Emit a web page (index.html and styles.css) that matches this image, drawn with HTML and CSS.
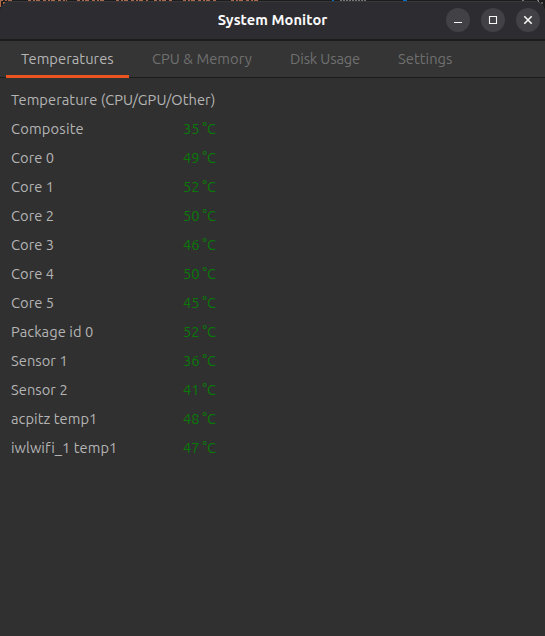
FILE: index.html
```
<!DOCTYPE html>
<html lang="en">
<head>
<meta charset="utf-8">
<title>System Monitor</title>
<link rel="stylesheet" href="styles.css">
</head>
<body>
<div class="desktop">
  <svg class="backdrop" width="545" height="8" viewBox="0 0 545 8" aria-hidden="true">
    <g fill="none" stroke-width="1">
      <path d="M0 .5H15M28 .5H67M77 .5H106M116 .5H148M154 .5H172M183 .5H218M231 .5H259" stroke="#a9694c" stroke-dasharray="3 2 2 1 4 3"/>
      <path d="M0 1V7M4 2V4" stroke="#b56a45" stroke-width="2"/>
      <path d="M332 .5h2M403 .5h4" stroke="#0870c4"/>
      <path d="M340 .5h27M522 .5h3M537 .5h2" stroke="#777" stroke-dasharray="2 1"/>
      <path d="M538 1l2 2M541 3h2" stroke="#999"/>
    </g>
  </svg>
  <main class="window">
    <header class="titlebar">
      <h1 class="title">System Monitor</h1>
      <div class="controls">
        <button class="control" aria-label="Minimize"><svg width="24" height="24" viewBox="0 0 24 24"><path d="M8 14.5h8"/></svg></button>
        <button class="control" aria-label="Maximize"><svg width="24" height="24" viewBox="0 0 24 24"><path d="M8.5 8.5h7v7h-7z"/></svg></button>
        <button class="control" aria-label="Close"><svg width="24" height="24" viewBox="0 0 24 24"><path class="cross" d="M8.3 8.3l7.4 7.4M15.7 8.3l-7.4 7.4"/></svg></button>
      </div>
    </header>
    <nav class="tabs">
      <a class="tab tab-temperatures active">Temperatures</a>
      <a class="tab tab-cpu">CPU &amp; Memory</a>
      <a class="tab tab-disk">Disk Usage</a>
      <a class="tab tab-settings">Settings</a>
    </nav>
    <section class="panel">
      <h2 class="heading">Temperature (CPU/GPU/Other)</h2>
      <dl class="readings">
        <dt class="composite">Composite</dt><dd>35<span class="unit">°C</span></dd>
        <dt>Core 0</dt><dd>49<span class="unit">°C</span></dd>
        <dt>Core 1</dt><dd>52<span class="unit">°C</span></dd>
        <dt>Core 2</dt><dd>50<span class="unit">°C</span></dd>
        <dt>Core 3</dt><dd>46<span class="unit">°C</span></dd>
        <dt>Core 4</dt><dd>50<span class="unit">°C</span></dd>
        <dt>Core 5</dt><dd>45<span class="unit">°C</span></dd>
        <dt>Package id 0</dt><dd>52<span class="unit">°C</span></dd>
        <dt>Sensor 1</dt><dd>36<span class="unit">°C</span></dd>
        <dt>Sensor 2</dt><dd>41<span class="unit">°C</span></dd>
        <dt>acpitz temp1</dt><dd>48<span class="unit">°C</span></dd>
        <dt>iwlwifi_1 temp1</dt><dd>47<span class="unit">°C</span></dd>
      </dl>
    </section>
  </main>
</div>
</body>
</html>
```
FILE: styles.css
```
* { box-sizing: border-box; }
body {
  margin: 0;
  background: #1c1c1c;
  font: 14.667px/29px Ubuntu, "Noto Sans", sans-serif;
  font-variant-ligatures: none;
  letter-spacing: 0.06px;
  color: #b4b4b4;
}
.desktop { position: relative; height: 636px; padding-top: 1px; overflow: hidden; }
.backdrop { position: absolute; top: 0; left: 0; }
.window {
  position: relative;
  height: 635px;
  display: flex;
  flex-direction: column;
  background: #303030;
  border-radius: 11px 11px 0 0;
  overflow: hidden;
}
.titlebar {
  height: 40px;
  flex: none;
  display: grid;
  grid-template-columns: 1fr auto 1fr;
  align-items: center;
  padding: 0 5px 1px;
  background: #2d2c31;
  border-top: 1px solid #39393c;
  border-bottom: 2px solid #1c1c1c;
  border-radius: 11px 11px 0 0;
}
.title {
  grid-column: 2;
  margin: 0;
  font-size: 14.667px;
  font-weight: 700;
  line-height: 24px;
  color: #fafafa;
  white-space: nowrap;
}
.controls { display: flex; gap: 11px; justify-content: flex-end; }
.control {
  width: 24px;
  height: 24px;
  padding: 0;
  border: 0;
  border-radius: 50%;
  background: #424145;
}
.control svg { display: block; }
.control path { fill: none; stroke: #f7f7f7; stroke-width: 1.1; }
.control .cross { stroke-width: 1.6; }
.tabs {
  height: 37px;
  flex: none;
  display: flex;
  gap: 8px;
  padding-left: 6px;
  background: #353535;
  border-bottom: 1px solid #1c1c1c;
}
.tab {
  height: 37px;
  padding: 0 15px;
  line-height: 36px;
  color: #707070;
  white-space: nowrap;
}
.tab.active { color: #b4b4b4; border-bottom: 3px solid #e95420; }
.tab-temperatures { width: 123px; }
.tab-cpu { width: 130px; }
.tab-disk { width: 100px; letter-spacing: -0.14px; }
.tab-settings { width: 84px; }
.panel { padding: 7px 11px; }
.heading { margin: 0; font-size: inherit; font-weight: 400; white-space: nowrap; }
.readings {
  display: grid;
  grid-template-columns: 172px 33px;
  grid-auto-rows: 29px;
  margin: 0;
}
dt { white-space: nowrap; }
.composite { letter-spacing: 0.2px; }
dd { display: flex; justify-content: space-between; margin: 0; color: #087a08; }
```
